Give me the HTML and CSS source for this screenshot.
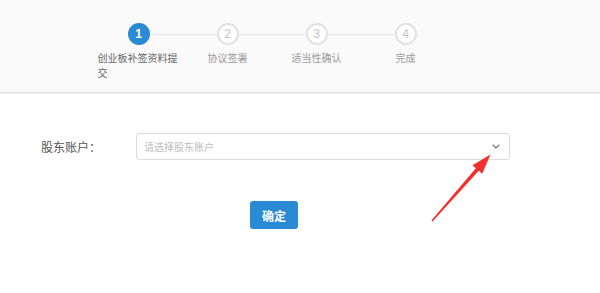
FILE: index.html
```html
<!DOCTYPE html>
<html lang="zh">
<head>
<meta charset="utf-8">
<link rel="stylesheet" href="styles.css">
</head>
<body>
<div class="page">
  <header class="header">
    <ol class="steps">
      <li class="step active"><span class="dot">1</span><span class="label">创业板补签资料提交</span></li>
      <li class="step"><span class="dot">2</span><span class="label">协议签署</span></li>
      <li class="step"><span class="dot">3</span><span class="label">适当性确认</span></li>
      <li class="step"><span class="dot">4</span><span class="label">完成</span></li>
    </ol>
  </header>
  <main class="form">
    <div class="row">
      <label class="field-label">股东账户：</label>
      <div class="select">
        <span class="placeholder">请选择股东账户</span>
        <svg class="chev" width="8" height="5" viewBox="0 0 8 5"><path d="M0.6 0.6 L4 4 L7.4 0.6" fill="none" stroke="#666" stroke-width="1.1"/></svg>
      </div>
    </div>
    <button class="btn">确定</button>
  </main>
  <svg class="arrow" width="600" height="293" viewBox="0 0 600 293">
    <path d="M431.4 220.5 L475.8 168.2 L472.4 165.2 L490.5 154.5 L482.2 173.8 L478.8 170.8 L432.6 221.5 Z" fill="#f2302e"/>
  </svg>
</div>
</body>
</html>
```
FILE: styles.css
```css
html, body {
  margin: 0;
  padding: 0;
  background: #fff;
}
body {
  font-family: "Noto Sans CJK SC", "Noto Sans", sans-serif;
  width: 600px;
  height: 293px;
  overflow: hidden;
}
.page {
  position: relative;
  width: 600px;
  height: 293px;
}
.header {
  background: #fafafa;
  height: 93px;
  border-bottom: 1px solid #dcdcdc;
  box-sizing: border-box;
  padding-top: 23px;
  box-shadow: 0 1px 0 #efefef;
}
.steps {
  list-style: none;
  margin: 0;
  padding: 0 0 0 94px;
  display: flex;
}
.step {
  position: relative;
  width: 89px;
  display: flex;
  flex-direction: column;
  align-items: center;
}
.step:not(:last-child)::after {
  content: "";
  position: absolute;
  top: 11px;
  left: calc(50% + 11px);
  width: 67px;
  height: 1px;
  background: #e6e6e6;
}
.dot {
  width: 22px;
  height: 22px;
  box-sizing: border-box;
  border-radius: 50%;
  border: 2px solid #e2e2e2;
  background: #fff;
  color: #c4c4c4;
  font-family: "Liberation Sans", Arial, sans-serif;
  font-size: 12px;
  line-height: 18px;
  text-align: center;
}
.step.active .dot {
  background: #2a8ad3;
  border-color: #2a8ad3;
  color: #fff;
  font-weight: bold;
}
.label {
  margin-top: 5px;
  max-width: 82px;
  font-size: 10px;
  line-height: 15px;
  color: #999;
  text-align: left;
}
.step.active .label {
  color: #666;
}
.form {
  padding-top: 40px;
}
.row {
  display: flex;
  align-items: center;
  padding-left: 41px;
}
.field-label {
  width: 95px;
  font-size: 12px;
  color: #555;
}
.select {
  width: 374px;
  height: 27px;
  box-sizing: border-box;
  border: 1px solid #dcdcdc;
  border-radius: 3px;
  display: flex;
  align-items: center;
  justify-content: space-between;
  padding: 0 9px 0 7px;
}
.placeholder {
  font-size: 10px;
  color: #bdbdbd;
}
.chev {
  display: block;
}
.btn {
  display: block;
  margin: 41px 0 0 250px;
  width: 48px;
  height: 28px;
  border: none;
  border-radius: 3px;
  background: #2a8ad3;
  color: #fff;
  font-family: "Noto Sans CJK SC", sans-serif;
  font-size: 12px;
  font-weight: bold;
  padding: 0;
}
.arrow {
  position: absolute;
  left: 0;
  top: 0;
  pointer-events: none;
}
```
